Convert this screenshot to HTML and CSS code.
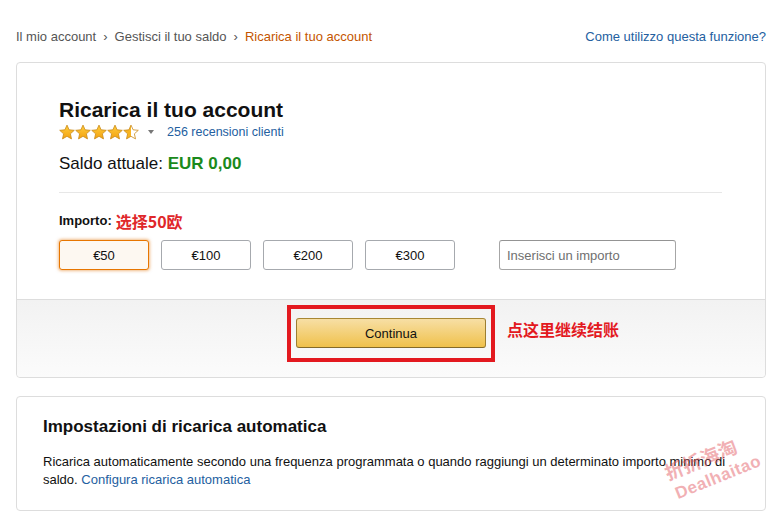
FILE: index.html
```html
<!DOCTYPE html>
<html lang="it">
<head>
<meta charset="utf-8">
<title>Ricarica il tuo account</title>
<link rel="stylesheet" href="styles.css">
</head>
<body>
<div class="page">
  <div class="topbar">
    <nav class="crumbs">
      <a class="crumb">Il mio account</a><span class="sep">›</span><a class="crumb">Gestisci il tuo saldo</a><span class="sep">›</span><span class="crumb current">Ricarica il tuo account</span>
    </nav>
    <a class="help">Come utilizzo questa funzione?</a>
  </div>

  <section class="card">
    <div class="card-body">
      <h1 class="title">Ricarica il tuo account</h1>
      <div class="rating">
        <svg class="stars" width="82" height="16" viewBox="0 0 82 16">
          <defs>
            <linearGradient id="sg" x1="0" y1="0" x2="0" y2="1">
              <stop offset="0" stop-color="#ffce3d"/>
              <stop offset="1" stop-color="#f3a10f"/>
            </linearGradient>
            <linearGradient id="half" x1="0" y1="0" x2="1" y2="0">
              <stop offset="0.5" stop-color="#f8b420"/>
              <stop offset="0.5" stop-color="#ffffff"/>
            </linearGradient>
            <path id="st" d="M7.5 0.6 L9.6 5.3 L14.8 5.8 L10.9 9.3 L12 14.4 L7.5 11.8 L3 14.4 L4.1 9.3 L0.2 5.8 L5.4 5.3 Z"/>
          </defs>
          <use href="#st" x="0.5" y="0.5" fill="url(#sg)" stroke="#c98a1a" stroke-width="0.8"/>
          <use href="#st" x="16.5" y="0.5" fill="url(#sg)" stroke="#c98a1a" stroke-width="0.8"/>
          <use href="#st" x="32.5" y="0.5" fill="url(#sg)" stroke="#c98a1a" stroke-width="0.8"/>
          <use href="#st" x="48.5" y="0.5" fill="url(#sg)" stroke="#c98a1a" stroke-width="0.8"/>
          <use href="#st" x="64.5" y="0.5" fill="url(#half)" stroke="#c98a1a" stroke-width="0.8"/>
        </svg>
        <span class="caret"></span>
        <a class="link reviews">256 recensioni clienti</a>
      </div>
      <p class="balance">Saldo attuale: <strong class="amount">EUR 0,00</strong></p>
      <hr class="divider">
      <div class="amount-label"><span class="label">Importo:</span> <span class="note">选择50欧</span></div>
      <div class="amount-row">
        <div class="choices">
          <button class="choice selected">€50</button>
          <button class="choice">€100</button>
          <button class="choice">€200</button>
          <button class="choice">€300</button>
        </div>
        <input class="custom" type="text" placeholder="Inserisci un importo">
      </div>
    </div>
    <div class="card-footer">
      <div class="highlight">
        <button class="continue">Continua</button>
        <span class="hint">点这里继续结账</span>
      </div>
    </div>
  </section>

  <section class="card auto">
    <h2 class="auto-title">Impostazioni di ricarica automatica</h2>
    <p class="auto-text">Ricarica automaticamente secondo una frequenza programmata o quando raggiungi un determinato importo minimo di saldo. <a class="link">Configura ricarica automatica</a></p>
    <div class="watermark">
      <span class="wm-cn">折折海淘</span>
      <span class="wm-en">Dealhaitao</span>
    </div>
  </section>
</div>
</body>
</html>
```

FILE: styles.css
```css
* { box-sizing: border-box; }

html, body {
  margin: 0;
  padding: 0;
  background: #ffffff;
}

body {
  font-family: "Liberation Sans", Arial, "Noto Sans CJK SC", sans-serif;
  font-size: 13px;
  color: #111111;
}

.page {
  padding: 29px 16px 0 16px;
}

.topbar {
  display: flex;
  justify-content: space-between;
  align-items: center;
  line-height: 16px;
  margin-bottom: 17px;
}

.crumbs {
  color: #555555;
  font-size: 13px;
}

.crumb { color: #555555; }
.crumb.current { color: #c45500; }

.sep {
  display: inline-block;
  padding: 0 7px;
  color: #555555;
}

.help, .link {
  color: #24609f;
  text-decoration: none;
}

.help {
  font-size: 13px;
}

.card {
  border: 1px solid #dddddd;
  border-radius: 4px;
  background: #ffffff;
}

.card-body {
  padding: 35px 43px 29px 42px;
}

.title {
  margin: 0;
  font-size: 21px;
  line-height: 24px;
  font-weight: bold;
  color: #111111;
}

.rating {
  display: flex;
  align-items: center;
  height: 18px;
  margin-top: 1px;
}

.stars {
  display: block;
}

.caret {
  width: 0;
  height: 0;
  border-left: 3.5px solid transparent;
  border-right: 3.5px solid transparent;
  border-top: 4px solid #777777;
  margin-left: 7px;
  margin-top: -1px;
}

.reviews {
  margin-left: 13px;
  font-size: 12.5px;
}

.balance {
  margin: 12px 0 0 0;
  font-size: 17px;
  line-height: 22px;
  color: #111111;
}

.amount {
  color: #1b8a1b;
  font-weight: bold;
}

.divider {
  border: 0;
  border-top: 1px solid #e7e7e7;
  margin: 17px 0 0 0;
  height: 0;
}

.amount-label {
  margin-top: 18px;
  line-height: 20px;
  display: flex;
  align-items: center;
}

.label {
  font-weight: bold;
  font-size: 13px;
  color: #111111;
}

.note {
  margin-left: 4px;
  color: #e0272a;
  font-weight: bold;
  font-size: 16px;
  font-family: "Noto Sans CJK SC", "Liberation Sans", sans-serif;
}

.amount-row {
  display: flex;
  align-items: center;
  margin-top: 9px;
}

.choices {
  display: flex;
  gap: 12px;
}

.choice {
  width: 90px;
  height: 30px;
  border: 1px solid #a6a9ae;
  border-radius: 3px;
  background: #ffffff;
  font-family: "Liberation Sans", Arial, sans-serif;
  font-size: 13px;
  color: #111111;
  padding: 0;
}

.choice.selected {
  background: #fdf8f1;
  border-color: #e77600;
  box-shadow: 0 0 3px 1px rgba(228, 121, 17, 0.5);
}

.custom {
  margin-left: 44px;
  width: 177px;
  height: 30px;
  border: 1px solid #a6a6a6;
  border-top-color: #949494;
  border-radius: 3px;
  padding: 0 7px;
  font-family: "Liberation Sans", Arial, sans-serif;
  font-size: 13px;
  color: #111111;
}

.custom::placeholder {
  color: #6f6f6f;
}

.card-footer {
  border-top: 1px solid #dddddd;
  background: linear-gradient(#f2f2f2, #fbfbfb);
  border-radius: 0 0 4px 4px;
  padding: 5px 0 15px 0;
  display: flex;
  justify-content: center;
}

.highlight {
  position: relative;
  border: 4px solid #e3191f;
  padding: 9px 5px 10px 5px;
}

.continue {
  display: block;
  width: 190px;
  height: 30px;
  border: 1px solid;
  border-color: #a88734 #9c7e31 #846a29;
  border-radius: 3px;
  background: linear-gradient(#f7dfa5, #f0c14b);
  font-family: "Liberation Sans", Arial, sans-serif;
  font-size: 13px;
  color: #111111;
  padding: 0;
}

.hint {
  position: absolute;
  left: calc(100% + 16px);
  top: 9px;
  white-space: nowrap;
  color: #e3191f;
  font-weight: bold;
  font-size: 16px;
  line-height: 22px;
  font-family: "Noto Sans CJK SC", "Liberation Sans", sans-serif;
}

.auto {
  position: relative;
  margin-top: 18px;
  padding: 19px 26px 21px 26px;
  overflow: hidden;
}

.auto-title {
  margin: 0;
  font-size: 17px;
  line-height: 22px;
  font-weight: bold;
  color: #111111;
}

.auto-text {
  margin: 15px 0 0 0;
  font-size: 13px;
  line-height: 18px;
  color: #111111;
}

.watermark {
  position: absolute;
  left: 645px;
  top: 44px;
  width: 112px;
  height: 80px;
  transform: rotate(-22deg);
  transform-origin: 50% 50%;
  pointer-events: none;
  display: flex;
  flex-direction: column;
  align-items: flex-start;
  opacity: 0.45;
}

.wm-cn {
  color: #e2525a;
  font-family: "Noto Sans CJK SC", sans-serif;
  font-weight: bold;
  font-size: 19px;
  line-height: 26px;
  margin-left: 10px;
}

.wm-en {
  color: #e2525a;
  font-family: "Liberation Sans", Arial, sans-serif;
  font-weight: bold;
  font-size: 17px;
  line-height: 22px;
  margin-left: 12px;
  letter-spacing: 0.5px;
}
```
